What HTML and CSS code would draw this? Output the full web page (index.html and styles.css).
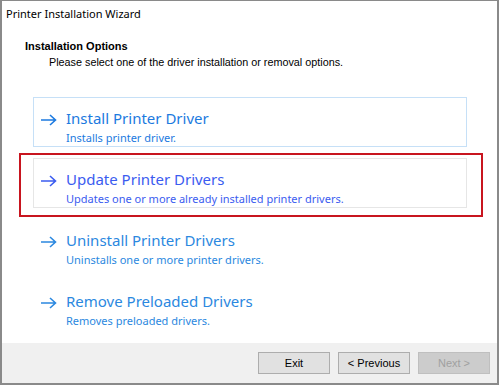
FILE: index.html
```html
<!DOCTYPE html>
<html>
<head>
<meta charset="utf-8">
<link rel="stylesheet" href="styles.css">
</head>
<body>
<div class="window">
  <div class="titlebar">Printer Installation Wizard</div>
  <div class="header">
    <div class="h-title">Installation Options</div>
    <div class="h-sub">Please select one of the driver installation or removal options.</div>
  </div>
  <div class="options">
    <div class="opt opt-focus">
      <svg class="arrow" viewBox="0 0 16 12" width="16" height="12"><path d="M0 6H14.5M9 1L14.5 6L9 11" fill="none" stroke="currentColor" stroke-width="1.6"/></svg>
      <div class="opt-text">
        <div class="opt-title">Install Printer Driver</div>
        <div class="opt-desc">Installs printer driver.</div>
      </div>
    </div>
    <div class="opt opt-hover">
      <svg class="arrow" viewBox="0 0 16 12" width="16" height="12"><path d="M0 6H14.5M9 1L14.5 6L9 11" fill="none" stroke="currentColor" stroke-width="1.6"/></svg>
      <div class="opt-text">
        <div class="opt-title">Update Printer Drivers</div>
        <div class="opt-desc">Updates one or more already installed printer drivers.</div>
      </div>
      <div class="highlight"></div>
    </div>
    <div class="opt">
      <svg class="arrow" viewBox="0 0 16 12" width="16" height="12"><path d="M0 6H14.5M9 1L14.5 6L9 11" fill="none" stroke="currentColor" stroke-width="1.6"/></svg>
      <div class="opt-text">
        <div class="opt-title">Uninstall Printer Drivers</div>
        <div class="opt-desc">Uninstalls one or more printer drivers.</div>
      </div>
    </div>
    <div class="opt">
      <svg class="arrow" viewBox="0 0 16 12" width="16" height="12"><path d="M0 6H14.5M9 1L14.5 6L9 11" fill="none" stroke="currentColor" stroke-width="1.6"/></svg>
      <div class="opt-text">
        <div class="opt-title">Remove Preloaded Drivers</div>
        <div class="opt-desc">Removes preloaded drivers.</div>
      </div>
    </div>
  </div>
  <div class="footer">
    <button class="btn">Exit</button>
    <button class="btn">&lt; Previous</button>
    <button class="btn btn-disabled">Next &gt;</button>
  </div>
</div>
</body>
</html>
```
FILE: styles.css
```css
html, body {
  margin: 0;
  padding: 0;
  background: #ffffff;
}
.window {
  box-sizing: border-box;
  width: 499px;
  height: 385px;
  border-top: 1px solid #8a8a8a;
  border-left: 2px solid #8a8a8a;
  border-right: 2px solid #8a8a8a;
  border-bottom: 2px solid #8a8a8a;
  background: #ffffff;
  display: flex;
  flex-direction: column;
  font-family: "Liberation Sans", Arial, sans-serif;
}
.titlebar {
  height: 30px;
  box-sizing: border-box;
  padding: 5px 0 0 4px;
  font-family: "Noto Sans", "Open Sans", sans-serif;
  font-size: 11px;
  line-height: 16px;
  color: #000;
}
.header {
  padding-left: 23px;
  height: 66px;
  box-sizing: border-box;
  padding-top: 8px;
}
.h-title {
  font-weight: bold;
  font-size: 11px;
  line-height: 14px;
  color: #000;
}
.h-sub {
  font-size: 10.8px;
  line-height: 14px;
  color: #000;
  padding-left: 24px;
  margin-top: 2px;
}
.options {
  flex: 1;
  padding-left: 31px;
  display: flex;
  flex-direction: column;
  gap: 11px;
}
.opt {
  position: relative;
  box-sizing: border-box;
  width: 434px;
  height: 50px;
  border: 1px solid transparent;
  display: flex;
  align-items: flex-start;
  padding: 15px 0 0 7px;
  color: #2b88e0;
}
.opt-focus {
  border-color: #c6e0f7;
  color: #1c7ae0;
}
.opt-hover {
  border-color: #e6e6e6;
  color: #3b5cf0;
}
.arrow {
  flex: none;
  margin-top: 1px;
}
.opt-text {
  margin-left: 9px;
  margin-top: -5px;
  font-family: "Noto Sans", "Open Sans", sans-serif;
}
.opt-title {
  font-size: 15px;
  line-height: 21px;
}
.opt-desc {
  font-size: 11px;
  line-height: 16px;
  margin-top: 1px;
}
.highlight {
  position: absolute;
  left: -15px;
  top: -6px;
  width: 464px;
  height: 64px;
  box-sizing: border-box;
  border: 2px solid #c8151f;
}
.footer {
  height: 40px;
  background: #f0f0f0;
  display: flex;
  justify-content: flex-end;
  align-items: flex-start;
  gap: 8px;
  padding: 9px 7px 0 0;
  box-sizing: border-box;
}
.btn {
  width: 72px;
  height: 22px;
  box-sizing: border-box;
  border: 1px solid #adadad;
  background: #e1e1e1;
  font-family: "Liberation Sans", Arial, sans-serif;
  font-size: 11px;
  color: #000;
  padding: 0;
}
.btn-disabled {
  border-color: #bfbfbf;
  background: #cccccc;
  color: #a0a0a0;
}
```
